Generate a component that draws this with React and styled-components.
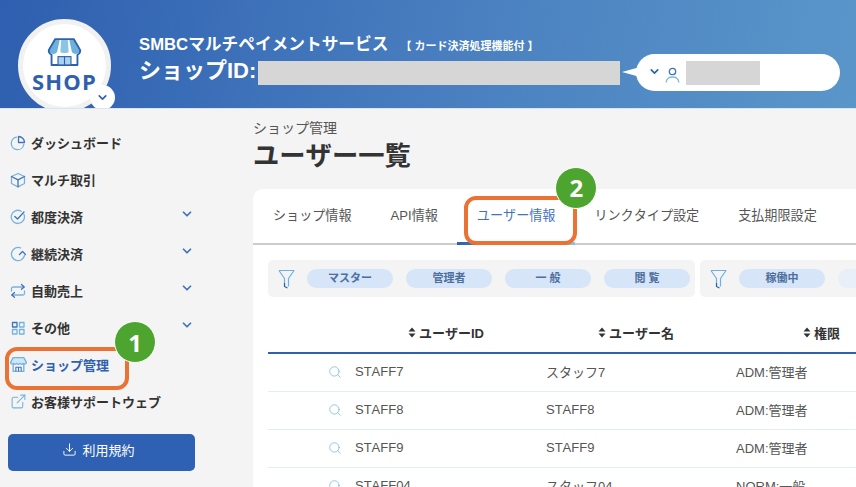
import React from 'react';
import styled, { createGlobalStyle } from 'styled-components';
import { ChevronDown, Download, ExternalLink, Search } from 'lucide-react';

const GlobalStyle = createGlobalStyle`
  html, body {
    margin: 0;
    height: 487px;
    overflow: hidden;
    background: #f4f4f4;
    font-family: "Liberation Sans", "Noto Sans CJK JP", sans-serif;
    font-kerning: none;
    color: #333;
  }
`;

const navItems = [
  { label: 'ダッシュボード', icon: 'pie' },
  { label: 'マルチ取引', icon: 'box' },
  { label: '都度決済', icon: 'check', more: true },
  { label: '継続決済', icon: 'renew', more: true },
  { label: '自動売上', icon: 'swap', more: true },
  { label: 'その他', icon: 'grid', more: true },
  { label: 'ショップ管理', icon: 'shop', active: true, marker: 1 },
  { label: 'お客様サポートウェブ', icon: 'link' },
];

const tabs = ['ショップ情報', 'API情報', 'ユーザー情報', 'リンクタイプ設定', '支払期限設定'];
const roles = ['マスター', '管理者', '一 般', '閲 覧'];

const rows = [
  ['STAFF7', 'スタッフ7', 'ADM:管理者'],
  ['STAFF8', 'STAFF8', 'ADM:管理者'],
  ['STAFF9', 'STAFF9', 'ADM:管理者'],
  ['STAFF04', 'スタッフ04', 'NORM:一般'],
];

const NavIcon = ({ type }) => {
  const dark = '#3f74bd';
  const light = '#74b4dc';
  const common = { width: 16, height: 16, viewBox: '0 0 16 16', fill: 'none', strokeWidth: 1.3, strokeLinecap: 'round', strokeLinejoin: 'round' };
  if (type === 'pie') {
    return (
      <svg {...common}>
        <path d="M6.5 2.2a6.3 6.3 0 1 0 7.3 7.3" stroke={light} />
        <path d="M8.5 1.5a6 6 0 0 1 6 6h-6z" stroke={dark} />
      </svg>
    );
  }
  if (type === 'box') {
    return (
      <svg {...common}>
        <path d="M8 1.5l6.5 3v7L8 14.8 1.5 11.5v-7z" stroke={light} />
        <path d="M1.5 4.5L8 7.8l6.5-3.3M8 7.8v7" stroke={dark} />
      </svg>
    );
  }
  if (type === 'check') {
    return (
      <svg {...common}>
        <path d="M14 5.5a6.6 6.6 0 1 1-2.8-3.3" stroke={light} />
        <path d="M4.8 7.5l2.7 2.5 6.5-7" stroke={dark} />
      </svg>
    );
  }
  if (type === 'renew') {
    return (
      <svg {...common}>
        <path d="M14.5 9.5a6.6 6.6 0 1 1-4-7.6" stroke={light} />
        <path d="M9.5 8.5l3-3 3 3" stroke={dark} />
      </svg>
    );
  }
  if (type === 'swap') {
    return (
      <svg {...common}>
        <path d="M1.5 8V5.5A1.5 1.5 0 0 1 3 4h11" stroke={light} />
        <path d="M14.5 8v2.5a1.5 1.5 0 0 1-1.5 1.5H2" stroke={light} />
        <path d="M11.5 1.5L14.2 4l-2.7 2.3M4.5 9.5L1.8 12l2.7 2.3" stroke={dark} />
      </svg>
    );
  }
  if (type === 'grid') {
    return (
      <svg {...common}>
        <rect x="2.5" y="2.5" width="4.5" height="4.5" stroke={dark} />
        <rect x="9.5" y="2.5" width="4.5" height="4.5" stroke={light} />
        <rect x="2.5" y="9.5" width="4.5" height="4.5" stroke={light} />
        <rect x="9.5" y="9.5" width="4.5" height="4.5" stroke={light} />
      </svg>
    );
  }
  if (type === 'link') {
    return <ExternalLink size={17} color={light} strokeWidth={1.5} />;
  }
  return (
    <svg {...common} width={17} height={17}>
      <path d="M3 1.5h10l2.5 4.5a1.8 1.8 0 0 1-3 1 1.8 1.8 0 0 1-3 0 1.8 1.8 0 0 1-3 0 1.8 1.8 0 0 1-3 0 1.8 1.8 0 0 1-3-1z" fill="#cfe6f4" stroke={light} />
      <path d="M3 8v6.5h10V8" stroke={light} />
      <path d="M5.5 14v-3.5h5V14M8 10.5V14" stroke={dark} strokeWidth={1} />
    </svg>
  );
};

const ShopLogo = () => (
  <svg width="37" height="30" viewBox="0 0 40 32">
    <path d="M10 2h20l7 12a5 5 0 0 1-9 2 5 5 0 0 1-8 0 5 5 0 0 1-8 0 5 5 0 0 1-9-2z" fill="#fff" />
    <path d="M10 2h5l-3 14a5 5 0 0 1-9-2zM25 2h5l7 12a5 5 0 0 1-9 2z" fill="#6db2dc" />
    <path d="M16.5 2h7l1 14a5 5 0 0 1-4.5 1 5 5 0 0 1-4.500-1z" fill="#8cc4e4" />
    <path d="M10 2h20l7 12a5 5 0 0 1-3 5v11H6V19a5 5 0 0 1-3-5z" fill="none" stroke="#2f60ae" strokeWidth="2" strokeLinejoin="round" />
    <rect x="13" y="21" width="14" height="9" fill="#a9d3ec" stroke="#2f60ae" strokeWidth="1.2" />
    <path d="M20 21v9" stroke="#2f60ae" strokeWidth="1.2" />
  </svg>
);

const UserIcon = () => (
  <svg width="15" height="16" viewBox="0 0 15 16" fill="none" strokeWidth="1.3" strokeLinecap="round">
    <circle cx="7.5" cy="4.5" r="3.2" stroke="#3f74bd" />
    <path d="M1.2 15c.5-3.5 3-5 6.3-5s5.800 1.500 6.300 5" stroke="#7dbbe0" />
  </svg>
);

const FilterIcon = () => (
  <svg width="17" height="20" viewBox="0 0 17 20" fill="none" strokeWidth="1.2" strokeLinejoin="round">
    <path d="M1 1.5h15l-5.5 8v8" stroke="#6db2dc" />
    <path d="M1 1.5l5.5 8V16" stroke="#6db2dc" />
    <path d="M6.5 14v3.5l3 1.5" stroke="#2f60ae" />
  </svg>
);

const SortIcon = () => (
  <svg width="8" height="11" viewBox="0 0 8 11">
    <path d="M4 .5L7.5 4.5H.5zM4 10.5L.5 6.500H7.500z" fill="#333" />
  </svg>
);

const App = () => (
  <>
    <GlobalStyle />
    <Page>
      <Header>
        <LogoCircle>
          <ShopLogo />
          <LogoText>SHOP</LogoText>
          <LogoToggle><ChevronDown size={13} strokeWidth={3} color="#2f60ae" /></LogoToggle>
        </LogoCircle>
        <HeaderInfo>
          <ServiceName>
            SMBCマルチペイメントサービス<ServiceNote>【 カード決済処理機能付 】</ServiceNote>
          </ServiceName>
          <ShopRow>
            <ShopId>ショップID:</ShopId>
            <Redacted $width="362px" />
            <UserBubble>
              <ChevronDown size={13} strokeWidth={3} color="#2f60ae" />
              <UserIcon />
              <Redacted $width="74px" />
            </UserBubble>
          </ShopRow>
        </HeaderInfo>
      </Header>
      <Body>
        <Sidebar>
          {navItems.map((item) => (
            <NavItem key={item.label} $active={item.active}>
              <NavIconSlot><NavIcon type={item.icon} /></NavIconSlot>
              {item.label}
              {item.more && <NavMore><ChevronDown size={14} strokeWidth={3} color="#3f74bd" /></NavMore>}
              {item.marker && (
                <>
                  <NavHighlight />
                  <NavMarker>{item.marker}</NavMarker>
                </>
              )}
            </NavItem>
          ))}
          <TermsButton><Download size={15} strokeWidth={1.5} />利用規約</TermsButton>
        </Sidebar>
        <Main>
          <Breadcrumb>ショップ管理</Breadcrumb>
          <PageTitle>ユーザー一覧</PageTitle>
          <Card>
            <TabBar>
              {tabs.map((tab, i) => (
                <Tab key={tab} $active={i === 2}>
                  {tab}
                  {i === 2 && (
                    <>
                      <TabHighlight />
                      <TabMarker>2</TabMarker>
                    </>
                  )}
                </Tab>
              ))}
            </TabBar>
            <FilterRow>
              <FilterGroup>
                <FilterIcon />
                {roles.map((role) => <Pill key={role}>{role}</Pill>)}
              </FilterGroup>
              <FilterGroup>
                <FilterIcon />
                <Pill>稼働中</Pill>
                <Pill $faded />
              </FilterGroup>
            </FilterRow>
            <TableHead>
              <span />
              <HeadCell $pad="53px"><SortIcon />ユーザーID</HeadCell>
              <HeadCell $pad="52px"><SortIcon />ユーザー名</HeadCell>
              <HeadCell $pad="67px"><SortIcon />権限</HeadCell>
            </TableHead>
            {rows.map((row) => (
              <TableRow key={row[0]}>
                <IconCell><Search size={14} strokeWidth={1.4} color="#7dbbe0" /></IconCell>
                {row.map((cell) => <span key={cell}>{cell}</span>)}
              </TableRow>
            ))}
          </Card>
        </Main>
      </Body>
    </Page>
  </>
);

const Page = styled.div`
  width: 856px;
  height: 487px;
  overflow: hidden;
  display: flex;
  flex-direction: column;
`;

const Header = styled.header`
  flex: none;
  height: 109px;
  box-sizing: border-box;
  padding: 19px 0 0 18px;
  display: flex;
  align-items: flex-start;
  overflow: hidden;
  color: #fff;
  background: linear-gradient(100deg, #2e5fb0 0%, #4a80c0 55%, #5a96ca 100%);
  border-bottom: 1px solid #dbe4f0;
`;

const LogoCircle = styled.div`
  flex: none;
  position: relative;
  width: 93px;
  height: 93px;
  box-sizing: border-box;
  padding-top: 13px;
  border: 5px solid #f1f1f1;
  border-radius: 50%;
  background: #fff;
  display: flex;
  flex-direction: column;
  align-items: center;
`;

const LogoText = styled.div`
  font-family: "Open Sans", sans-serif;
  font-weight: 700;
  font-size: 22px;
  line-height: 25px;
  margin-top: 2px;
  letter-spacing: 1.2px;
  color: #2f60ae;
`;

const LogoToggle = styled.div`
  position: absolute;
  right: -9px;
  bottom: -3px;
  width: 25px;
  height: 25px;
  border-radius: 50%;
  background: #fff;
  display: flex;
  align-items: center;
  justify-content: center;
`;

const HeaderInfo = styled.div`
  margin: 15px 0 0 28px;
`;

const ServiceName = styled.div`
  height: 20px;
  font-size: 16.7px;
  line-height: 22px;
  font-weight: 700;
  white-space: nowrap;
`;

const ServiceNote = styled.span`
  margin-left: 12px;
  font-size: 11px;
  font-weight: 700;
`;

const ShopRow = styled.div`
  display: flex;
  align-items: center;
  height: 37px;
`;

const ShopId = styled.div`
  font-size: 22px;
  line-height: 28px;
  margin-bottom: 3px;
  font-weight: 700;
  white-space: nowrap;
  width: 119px;
`;

const Redacted = styled.div`
  flex: none;
  width: ${(p) => p.$width};
  height: 24px;
  background: #d6d6d6;
`;

const UserBubble = styled.div`
  flex: none;
  position: relative;
  margin-left: 16px;
  width: 204px;
  height: 37px;
  box-sizing: border-box;
  padding: 0 0 0 12px;
  display: flex;
  align-items: center;
  gap: 4px;
  border-radius: 19px;
  background: #fff;

  svg:first-child {
    margin-bottom: 3px;
  }

  svg:nth-child(2) {
    margin-right: 2px;
    margin-top: 5px;
  }

  &::before {
    content: '';
    position: absolute;
    left: -14px;
    top: 13px;
    width: 18px;
    height: 10px;
    background: #fff;
    clip-path: polygon(0 50%, 100% 0, 100% 100%);
  }
`;

const Body = styled.div`
  flex: 1;
  display: flex;
  min-height: 0;
`;

const Sidebar = styled.nav`
  flex: none;
  width: 240px;
  box-sizing: border-box;
  padding: 15px 0 0 8px;
`;

const NavItem = styled.div`
  position: relative;
  width: 187px;
  height: 37px;
  display: flex;
  align-items: center;
  font-size: 13px;
  font-weight: 700;
  white-space: nowrap;
  color: ${(p) => (p.$active ? '#2f60ae' : '#333')};
`;

const NavIconSlot = styled.span`
  flex: none;
  width: 23px;
  margin-left: 2px;
  margin-right: -2px;
  display: flex;
  align-items: center;
`;

const NavMore = styled.span`
  position: absolute;
  right: 1px;
  top: 9px;
  display: flex;
`;

const NavHighlight = styled.span`
  position: absolute;
  left: -3px;
  top: 1px;
  width: 124px;
  height: 43px;
  box-sizing: border-box;
  border: 4px solid #ea7234;
  border-radius: 12px;
`;

const Marker = styled.span`
  position: absolute;
  width: 42px;
  height: 42px;
  box-sizing: border-box;
  border: 1.5px solid #fff;
  border-radius: 50%;
  background: #4da52f;
  color: #fff;
  font-family: "Open Sans", sans-serif;
  font-size: 24px;
  font-weight: 700;
  display: flex;
  align-items: center;
  justify-content: center;
`;

const NavMarker = styled(Marker)`
  left: 106px;
  top: -25px;
`;

const Main = styled.main`
  flex: 1;
  min-width: 0;
  padding: 10px 0 0 13px;
`;

const Breadcrumb = styled.div`
  font-size: 14px;
  line-height: 18px;
  color: #555;
`;

const PageTitle = styled.h1`
  margin: 0;
  height: 52px;
  font-size: 26.3px;
  line-height: 38px;
  font-weight: 700;
  color: #333;
`;

const Card = styled.section`
  width: 720px;
  height: 320px;
  box-sizing: border-box;
  padding: 0 15px;
  border-radius: 10px 0 0 0;
  background: #fff;
`;

const TabBar = styled.div`
  display: flex;
  height: 56px;
  margin: 0 -15px;
  padding-left: 0.5px;
  box-sizing: border-box;
  border-bottom: 2px solid #ccc;
`;

const Tab = styled.div`
  position: relative;
  padding: 0 19.5px;
  font-size: 13.1px;
  line-height: 54px;
  white-space: nowrap;
  color: ${(p) => (p.$active ? '#3f74bd' : '#555')};

  ${(p) => p.$active && `
    &::after {
      content: '';
      position: absolute;
      left: 0;
      right: 0;
      bottom: -2px;
      height: 3px;
      background: linear-gradient(90deg, #2f60ae, #8cc4e4);
    }
  `}
`;

const TabHighlight = styled.span`
  position: absolute;
  left: 7px;
  top: 7px;
  width: 113px;
  height: 49px;
  z-index: 1;
  box-sizing: border-box;
  border: 4px solid #ea7234;
  border-radius: 12px;
`;

const TabMarker = styled(Marker)`
  z-index: 2;
  left: 98px;
  top: -22px;
`;

const FilterRow = styled.div`
  display: flex;
  gap: 5px;
  margin-top: 15px;
`;

const FilterGroup = styled.div`
  flex: none;
  width: 427px;
  height: 37px;
  box-sizing: border-box;
  padding: 0 0 0 10px;
  display: flex;
  align-items: center;
  gap: 13px;
  border-radius: 5px;
  background: #f4f4f4;

  svg {
    flex: none;
    margin-right: -1px;
  }
`;

const Pill = styled.span`
  flex: none;
  width: 86px;
  height: 19px;
  border-radius: 10px;
  background: ${(p) => (p.$faded ? '#e8eff9' : '#d6e5f8')};
  color: #4d6f9e;
  font-size: 11px;
  font-weight: 700;
  line-height: 19px;
  text-align: center;
`;

const Columns = styled.div`
  display: grid;
  grid-template-columns: 87px 191px 190px 1fr;
  width: 588px;
`;

const TableHead = styled(Columns)`
  margin-top: 17px;
  height: 40px;
  box-sizing: border-box;
  border-bottom: 2px solid #2f60ae;
  padding-bottom: 2px;
  align-items: center;
  font-size: 13px;
  font-weight: 700;
`;

const HeadCell = styled.span`
  display: flex;
  align-items: center;
  gap: 3px;
  padding-left: ${(p) => p.$pad};
  white-space: nowrap;
`;

const TableRow = styled(Columns)`
  height: 38px;
  box-sizing: border-box;
  padding-bottom: 2px;
  align-items: center;
  border-bottom: 1px solid #e4edf5;
  font-size: 13px;
  color: #555;
`;

const IconCell = styled.span`
  display: flex;
  justify-content: flex-end;
  padding-right: 13px;
`;

const TermsButton = styled.button`
  margin-top: 14px;
  width: 187px;
  height: 37px;
  padding: 0 6px 6px 0;
  display: flex;
  align-items: center;
  justify-content: center;
  gap: 5px;
  border: none;
  border-radius: 5px;
  background: #2e60b3;
  color: #fff;
  font-family: inherit;
  font-size: 13px;
`;

export default App;
